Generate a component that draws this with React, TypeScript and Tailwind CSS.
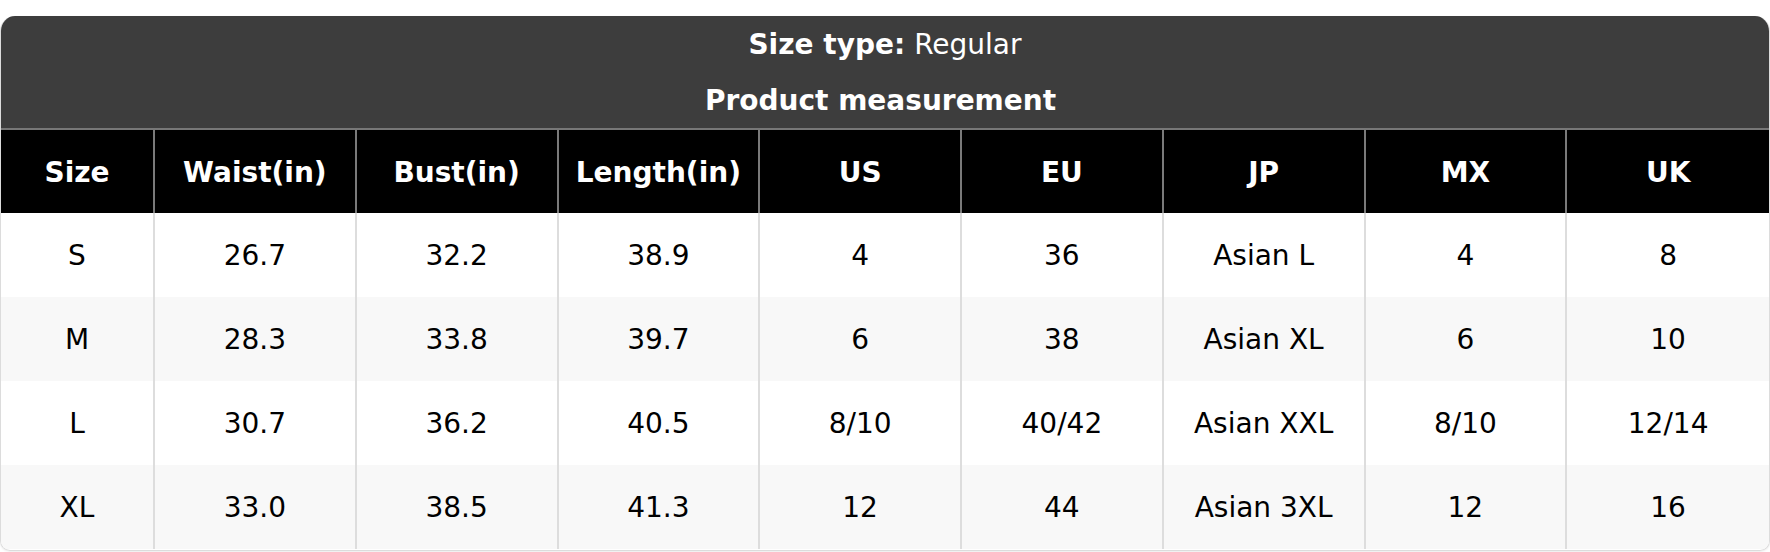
import React from "react";

const headers = ["Size", "Waist(in)", "Bust(in)", "Length(in)", "US", "EU", "JP", "MX", "UK"];
const rows = [
  ["S", "26.7", "32.2", "38.9", "4", "36", "Asian L", "4", "8"],
  ["M", "28.3", "33.8", "39.7", "6", "38", "Asian XL", "6", "10"],
  ["L", "30.7", "36.2", "40.5", "8/10", "40/42", "Asian XXL", "8/10", "12/14"],
  ["XL", "33.0", "38.5", "41.3", "12", "44", "Asian 3XL", "12", "16"],
];

export default function App() {
  return (
    <div
      className="w-[1770px] h-[552px] bg-white pt-[16px]"
      style={{ fontFamily: '"DejaVu Sans", Verdana, sans-serif' }}
    >
      <div className="w-[1770px] h-[535px] rounded-t-[15px] rounded-b-[10px] overflow-hidden border border-[#dcdcdc] border-t-0 shadow-[0_1px_2px_rgba(0,0,0,0.08)]">
        <div className="bg-[#3d3d3d] text-white text-[28px] text-center">
          <div className="h-[56px] pt-[2px] flex items-center justify-center">
            <span className="font-bold">Size type:</span>
            <span className="ml-[9px]">Regular</span>
          </div>
          <div className="h-[56px] pt-[2px] pr-[9px] flex items-center justify-center font-bold">Product measurement</div>
        </div>
        <div className="grid grid-cols-[154px_repeat(8,1fr)] border-t-2 border-[#777777]">
          {headers.map((h, i) => (
            <div
              key={h}
              className={`h-[83px] pt-[2px] bg-black text-white font-bold text-[28px] flex items-center justify-center ${
                i < headers.length - 1 ? "border-r-2 border-[#7a7a7a]" : ""
              }`}
            >
              {h}
            </div>
          ))}
          {rows.map((r, ri) =>
            r.map((c, ci) => (
              <div
                key={`${ri}-${ci}`}
                className={`h-[84px] pt-[2px] text-[28px] text-black flex items-center justify-center ${
                  ri % 2 === 1 ? "bg-[#f8f8f8]" : "bg-white"
                } ${ci < r.length - 1 ? "border-r-2 border-[#dddddd]" : ""}`}
              >
                {c}
              </div>
            ))
          )}
        </div>
      </div>
    </div>
  );
}
